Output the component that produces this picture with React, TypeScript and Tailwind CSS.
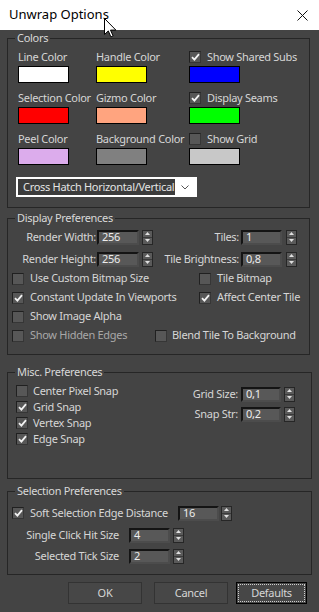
import type { ReactNode } from "react";

const Check = ({ on }: { on?: boolean }) => (
  <span className="flex h-[12px] w-[12px] shrink-0 items-center justify-center border border-t-[#202020] border-l-[#202020] border-r-[#363636] border-b-[#363636] bg-[#575757]">
    {on && (
      <svg width="9" height="8" viewBox="0 0 9 8">
        <path d="M1 4.2l2.4 2.4L8 1.2" stroke="#f2f2f2" strokeWidth="1.8" fill="none" />
      </svg>
    )}
  </span>
);

const Spin = ({ className = "" }: { className?: string }) => (
  <span className={`flex h-[15px] w-[11px] shrink-0 flex-col border border-[#262626] bg-[#5a5a5a] ${className}`}>
    <span className="flex flex-1 items-center justify-center border-b border-[#3a3a3a]">
      <svg width="5" height="3" viewBox="0 0 5 3">
        <path d="M0 3h5L2.5 0z" fill="#e0e0e0" />
      </svg>
    </span>
    <span className="flex flex-1 items-center justify-center">
      <svg width="5" height="3" viewBox="0 0 5 3">
        <path d="M0 0h5L2.5 3z" fill="#e0e0e0" />
      </svg>
    </span>
  </span>
);

const Field = ({ value, className = "" }: { value: string; className?: string }) => (
  <span
    className={`flex h-[15px] shrink-0 items-center border-2 border-t-[#141414] border-l-[#141414] border-r-[#4c4c4c] border-b-[#4c4c4c] bg-[#585858] pl-[3px] text-[#ececec] ${className}`}
  >
    {value}
  </span>
);

const Group = ({
  title,
  className = "",
  children,
}: {
  title: string;
  className?: string;
  children: ReactNode;
}) => (
  <fieldset className={`min-w-0 border border-[#262626] ${className}`}>
    <legend className="ml-[7px] px-[2px] leading-[16px] text-[#d8d8d8]">{title}</legend>
    {children}
  </fieldset>
);

const Swatch = ({ label, color }: { label: string; color: string }) => (
  <div>
    <div className="h-[16px] leading-[16px]">{label}</div>
    <div className={`mt-[1px] h-[17px] w-[51px] border border-black ${color}`} />
  </div>
);

const CheckSwatch = ({ label, on, color }: { label: string; on?: boolean; color: string }) => (
  <div>
    <div className="flex h-[16px] items-center gap-[6px]">
      <Check on={on} />
      <span>{label}</span>
    </div>
    <div className={`mt-[1px] h-[17px] w-[51px] border border-black ${color}`} />
  </div>
);

const CheckRow = ({ label, on, dim }: { label: string; on?: boolean; dim?: boolean }) => (
  <div className="flex items-center gap-[6px]">
    <Check on={on} />
    <span className={dim ? "text-[#a8a8a8]" : ""}>{label}</span>
  </div>
);

export default function App() {
  return (
    <div className="relative flex h-[612px] w-[319px] flex-col overflow-hidden whitespace-nowrap bg-[#444444] font-['Noto_Sans',sans-serif] text-[11px] tracking-[-0.3px] text-[#d6d6d6]">
      {/* title bar */}
      <div className="flex h-[30px] shrink-0 items-center justify-between bg-white pl-[9px] pr-[11px] tracking-normal">
        <span className="text-[13px] text-black">Unwrap Options</span>
        <svg width="11" height="11" viewBox="0 0 11 11">
          <path d="M0.5 0.5l10 10M10.5 0.5l-10 10" stroke="#111" strokeWidth="1" />
        </svg>
      </div>
      <svg className="absolute left-[104px] top-[18px]" width="13" height="20" viewBox="0 0 13 20">
        <path d="M0.5 0.5v16l3.8-3.6 2.6 6 2.2-1-2.6-5.8h5.4z" fill="#fff" stroke="#000" strokeWidth="1" />
      </svg>

      <Group title="Colors" className="ml-[7px] mr-[9px]">
        <div className="grid grid-cols-[78px_93px_1fr] gap-y-[7px] pl-[10px] pt-[3px]">
          <Swatch label="Line Color" color="bg-white" />
          <Swatch label="Handle Color" color="bg-[#ffff00]" />
          <CheckSwatch label="Show Shared Subs" on color="bg-[#0000ff]" />
          <Swatch label="Selection Color" color="bg-[#ff0000]" />
          <Swatch label="Gizmo Color" color="bg-[#ffa47f]" />
          <CheckSwatch label="Display Seams" on color="bg-[#00ff00]" />
          <Swatch label="Peel Color" color="bg-[#dcacec]" />
          <Swatch label="Background Color" color="bg-[#808080]" />
          <CheckSwatch label="Show Grid" color="bg-[#c8c8c8]" />
        </div>
        <div className="mb-[10px] ml-[8px] mt-[12px] flex h-[20px] w-[181px] border-2 border-white bg-[#3c3c3c]">
          <span className="flex-1 overflow-hidden pl-[5px] leading-[16px] text-[#e4e4e4]">Cross Hatch Horizontal/Vertical</span>
          <span className="flex w-[20px] shrink-0 items-center justify-center bg-white">
            <svg width="8" height="5" viewBox="0 0 8 5">
              <path d="M0.5 0.5l3.5 3.5 3.5-3.5" stroke="#555" strokeWidth="1" fill="none" />
            </svg>
          </span>
        </div>
      </Group>

      <Group title="Display Preferences" className="ml-[7px] mr-[9px] mt-[2px]">
        <div className="flex flex-col gap-[6px] pt-[3px]">
          <div className="flex h-[16px] items-center">
            <span className="w-[88px] text-right">Render Width:</span>
            <Field value="256" className="ml-[1px] w-[42px]" />
            <Spin className="ml-[3px]" />
            <span className="w-[86px] text-right">Tiles:</span>
            <Field value="1" className="ml-[2px] w-[41px]" />
            <Spin className="ml-[4px]" />
          </div>
          <div className="flex h-[16px] items-center">
            <span className="w-[88px] text-right">Render Height:</span>
            <Field value="256" className="ml-[1px] w-[42px]" />
            <Spin className="ml-[3px]" />
            <span className="w-[86px] text-right">Tile Brightness:</span>
            <Field value="0,8" className="ml-[2px] w-[41px]" />
            <Spin className="ml-[4px]" />
          </div>
        </div>
        <div className="mt-[2px] grid grid-cols-[187px_1fr] auto-rows-[19px] items-center pl-[4px]">
          <CheckRow label="Use Custom Bitmap Size" />
          <CheckRow label="Tile Bitmap" />
          <CheckRow label="Constant Update In Viewports" on />
          <CheckRow label="Affect Center Tile" on />
          <CheckRow label="Show Image Alpha" />
          <div />
        </div>
        <div className="mb-[9px] flex h-[19px] items-center pl-[4px]">
          <div className="w-[143px]">
            <CheckRow label="Show Hidden Edges" dim />
          </div>
          <div className="flex items-center gap-[5px]">
            <Check />
            <span>Blend Tile To Background</span>
          </div>
        </div>
      </Group>

      <Group title="Misc. Preferences" className="ml-[7px] mr-[7px] mt-[9px]">
        <div className="flex pb-[31px]">
          <div className="flex w-[160px] flex-col pl-[8px] pt-[3px]">
            {[
              ["Center Pixel Snap", false],
              ["Grid Snap", true],
              ["Vertex Snap", true],
              ["Edge Snap", true],
            ].map(([label, on]) => (
              <div key={label as string} className="flex h-[16px] items-center gap-[5px]">
                <Check on={on as boolean} />
                <span>{label as string}</span>
              </div>
            ))}
          </div>
          <div className="flex flex-col gap-[4px] pt-[6px]">
            <div className="flex h-[16px] items-center">
              <span className="w-[70px] text-right">Grid Size:</span>
              <Field value="0,1" className="ml-[3px] h-[14px] w-[40px]" />
              <Spin className="ml-[3px] h-[14px]" />
            </div>
            <div className="flex h-[16px] items-center">
              <span className="w-[70px] text-right">Snap Str:</span>
              <Field value="0,2" className="ml-[3px] h-[14px] w-[40px]" />
              <Spin className="ml-[3px] h-[14px]" />
            </div>
          </div>
        </div>
      </Group>

      <Group title="Selection Preferences" className="ml-[7px] mr-[7px] mt-[4px]">
        <div className="pb-[10px] pt-[6px]">
          <div className="flex h-[16px] items-center pl-[4px]">
            <Check on />
            <span className="ml-[6px] w-[148px]">Soft Selection Edge Distance</span>
            <Field value="16" className="w-[41px]" />
            <Spin className="ml-[2px]" />
          </div>
          <div className="mt-[6px] flex h-[16px] items-center">
            <span className="w-[111px] text-right">Single Click Hit Size</span>
            <Field value="4" className="ml-[10px] w-[41px]" />
            <Spin className="ml-[3px]" />
          </div>
          <div className="mt-[5px] flex h-[16px] items-center">
            <span className="w-[111px] text-right">Selected Tick Size</span>
            <Field value="2" className="ml-[10px] w-[41px]" />
            <Spin className="ml-[3px]" />
          </div>
        </div>
      </Group>

      <div className="mt-[7px] flex justify-end pr-[12px]">
        <button className="h-[22px] w-[74px] border border-[#333333] bg-[#474747] text-[#d6d6d6]">OK</button>
        <button className="ml-[12px] h-[22px] w-[74px] border border-[#333333] bg-[#474747] text-[#d6d6d6]">Cancel</button>
        <button className="ml-[8px] h-[22px] w-[71px] border border-black bg-[#474747] p-[1px] text-[#d6d6d6]">
          <span className="flex h-full w-full items-center justify-center border border-dotted border-[#cfcfcf]">Defaults</span>
        </button>
      </div>
    </div>
  );
}
